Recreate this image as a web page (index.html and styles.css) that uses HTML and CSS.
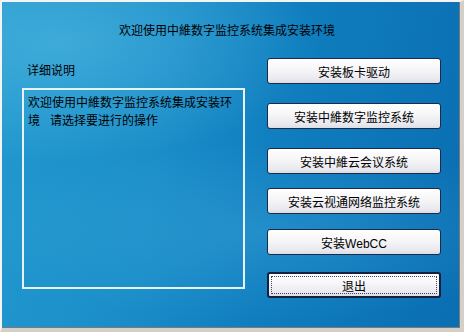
FILE: index.html
```html
<!DOCTYPE html>
<html lang="zh-CN">

<head>
    <meta charset="UTF-8">
    <title>欢迎使用中維数字监控系统集成安装环境</title>
    <link rel="stylesheet" href="styles.css">
</head>

<body>
    <div class="window">
        <div class="title">欢迎使用中維数字监控系统集成安装环境</div>

        <div class="content">
            <div class="info">
                <div class="info-label">详细说明</div>
                <div class="info-box">欢迎使用中維数字监控系统集成安装环境&nbsp;&nbsp;&nbsp;请选择要进行的操作</div>
            </div>

            <div class="actions">
                <button class="btn">安装板卡驱动</button>
                <button class="btn btn-2">安装中維数字监控系统</button>
                <button class="btn btn-3">安装中維云会议系统</button>
                <button class="btn btn-4">安装云视通网络监控系统</button>
                <button class="btn btn-5">安装WebCC</button>
                <button class="btn btn-default btn-6"><span class="focus">退出</span></button>
            </div>
        </div>
    </div>
</body>

</html>
```

FILE: styles.css
```css
* {
    margin: 0;
    padding: 0;
    box-sizing: border-box;
}

html,
body {
    width: 464px;
    height: 332px;
    overflow: hidden;
}

body {
    font-family: "Liberation Sans", "Noto Sans CJK SC", sans-serif;
    font-size: 12px;
    color: #000;
}

/* Window frame */
.window {
    width: 464px;
    height: 332px;
    border-top: 2px solid #f4f4f4;
    border-left: 2px solid #f4f4f4;
    border-right: 4px solid #d4d0c8;
    border-bottom: 4px solid #d4d0c8;
    box-shadow: inset -1px -1px 0 #7a7a7a;
    background:
        radial-gradient(ellipse 260px 120px at 60px 40px, rgba(120, 210, 240, 0.35), transparent),
        radial-gradient(ellipse 300px 90px at 260px 230px, rgba(90, 190, 235, 0.25), transparent),
        linear-gradient(100deg, #2299cf 0%, #1a8dc8 35%, #0f7dbe 60%, #0a6eb2 100%);
}

.title {
    padding: 21px 8px 0 0;
    line-height: 16px;
    text-align: center;
}

/* Two columns */
.content {
    display: grid;
    grid-template-columns: 223px 174px;
    column-gap: 22px;
    margin-top: 19px;
    padding-left: 20px;
}

.info-label {
    margin: 5px 0 0 5px;
    line-height: 16px;
}

.info-box {
    margin-top: 9px;
    height: 201px;
    padding: 4px 5px 0 4px;
    border: 2px solid #e6f2f8;
    line-height: 18px;
}

/* Buttons */
.actions {
    display: flex;
    flex-direction: column;
}

.btn {
    height: 26px;
    font-family: inherit;
    font-size: 12px;
    color: #000;
    border: 1px solid #1d2b4a;
    border-radius: 3px;
    background: linear-gradient(#ffffff, #f6f6f8 45%, #e8e8ee 85%, #dcdce4);
    cursor: pointer;
}

.btn-2,
.btn-3 {
    margin-top: 19px;
}

.btn-4 {
    margin-top: 14px;
}

.btn-5 {
    margin-top: 15px;
}

.btn-6 {
    margin-top: 17px;
}

.btn-default {
    border: 2px solid #15213e;
    padding: 2px;
}

.btn-default .focus {
    display: flex;
    align-items: center;
    justify-content: center;
    height: 100%;
    border: 1px dotted #3c4660;
}
```
